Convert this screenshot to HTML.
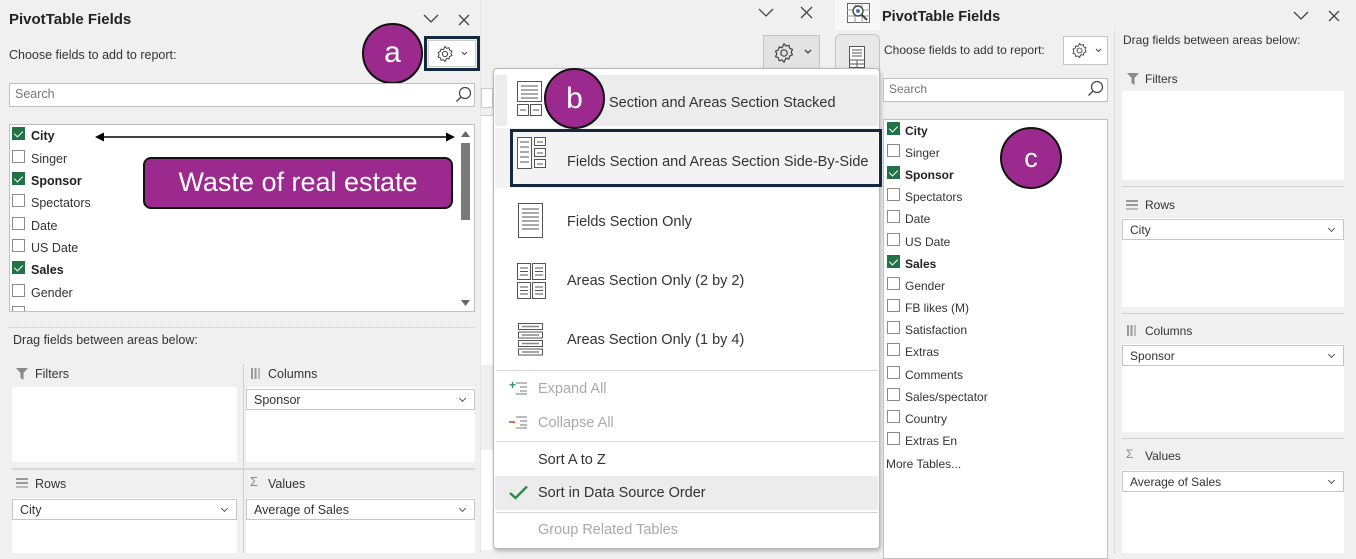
<!DOCTYPE html>
<html><head><meta charset="utf-8"><style>
*{box-sizing:border-box;margin:0;padding:0}
body{width:1356px;height:553px;background:#f0f0f0;position:relative;overflow:hidden;font-family:"Liberation Sans",sans-serif;color:#333}
.a{position:absolute}
.t{position:absolute;white-space:nowrap;font-size:12.5px;color:#333}
.b{font-weight:bold;color:#222}
.cb{position:absolute;width:13px;height:13px;border:1px solid #8a8a8a;background:#fff}
.ck{background:#217346;border-color:#217346}
.ck:after{content:"";position:absolute;left:3px;top:1px;width:4px;height:7px;border:solid #fff;border-width:0 1.5px 1.5px 0;transform:rotate(45deg)}
.box{position:absolute;background:#fff;border:1px solid #c8c8c8}
.wb{position:absolute;background:#fff}
.dd{position:absolute;background:#fff;border:1px solid #c6c6c6;font-size:12.5px;padding:3px 7px;color:#333}
.dd:after{content:"";position:absolute;right:9px;top:6px;width:4px;height:4px;border:solid #555;border-width:0 1.2px 1.2px 0;transform:rotate(45deg)}
.circ{position:absolute;border-radius:50%;background:#9c2a8e;border:2px solid #111;color:#fff;font-size:30px;text-align:center}
.mi{position:absolute;font-size:14.5px;color:#333;white-space:nowrap}
.dis{color:#aaa}
.hr{position:absolute;height:1px;background:#d6d6d6}
</style></head><body>

<!-- LEFT PANEL -->
<div class="t b" style="left:9px;top:11px;font-size:15px">PivotTable Fields</div>
<svg class="a" style="left:423px;top:14px" width="16" height="10"><path d="M1 1 L8 8 L15 1" stroke="#444" stroke-width="1.3" fill="none"/></svg>
<svg class="a" style="left:458px;top:14px" width="12" height="12"><path d="M1 1L11 11M11 1L1 11" stroke="#444" stroke-width="1.3"/></svg>
<div class="t" style="left:9px;top:48px;font-size:12.5px">Choose fields to add to report:</div>
<div class="a" style="left:424px;top:36px;width:56px;height:35px;border:3px solid #13293d;background:#f0f0f0"></div>
<div class="a" style="left:428px;top:40px;width:48px;height:27px;background:#fff;border:1px solid #ccc"></div>
<svg class="a" style="left:436px;top:45px" width="18" height="18" viewBox="0 0 18 18"><path d="M9 1.5l1.6 1.8 2.4-.6.6 2.4 2.3 1-1 2.2 1 2.2-2.3 1-.6 2.4-2.4-.6L9 16.5l-1.6-1.8-2.4.6-.6-2.4-2.3-1 1-2.2-1-2.2 2.3-1 .6-2.4 2.4.6z" fill="none" stroke="#444" stroke-width="1"/><circle cx="9" cy="9" r="2.6" fill="none" stroke="#444" stroke-width="1"/></svg>
<svg class="a" style="left:461px;top:51px" width="7" height="5"><path d="M1 1L3.5 3.5L6 1" stroke="#444" fill="none"/></svg>
<div class="circ" style="left:362px;top:23px;width:61px;height:61px;line-height:56px">a</div>

<div class="box" style="left:9px;top:83px;width:466px;height:24px;border-color:#c0c0c0"></div>
<div class="t" style="left:15px;top:87px;color:#777">Search</div>
<svg class="a" style="left:455px;top:86px" width="17" height="17"><circle cx="10" cy="7" r="5.5" fill="none" stroke="#444" stroke-width="1.2"/><path d="M6 11L1.5 15.5" stroke="#444" stroke-width="1.3"/></svg>

<div class="box" style="left:9px;top:124px;width:466px;height:188px;border-color:#c0c0c0"></div>
<div class="a" style="left:461px;top:143px;width:9px;height:77px;background:#7a7a7a"></div>
<svg class="a" style="left:460px;top:129px" width="11" height="180"><path d="M1 8L5.5 2L10 8Z M1 171L5.5 177L10 171Z" fill="#666"/></svg>

<div class="cb ck" style="left:12px;top:127px"></div><div class="t b" style="left:31px;top:129px">City</div>
<div class="cb" style="left:12px;top:150px"></div><div class="t" style="left:31px;top:152px">Singer</div>
<div class="cb ck" style="left:12px;top:172px"></div><div class="t b" style="left:31px;top:174px">Sponsor</div>
<div class="cb" style="left:12px;top:194px"></div><div class="t" style="left:31px;top:196px">Spectators</div>
<div class="cb" style="left:12px;top:217px"></div><div class="t" style="left:31px;top:219px">Date</div>
<div class="cb" style="left:12px;top:239px"></div><div class="t" style="left:31px;top:241px">US Date</div>
<div class="cb ck" style="left:12px;top:261px"></div><div class="t b" style="left:31px;top:263px">Sales</div>
<div class="cb" style="left:12px;top:284px"></div><div class="t" style="left:31px;top:286px">Gender</div>
<div class="cb" style="left:12px;top:306px;height:5px;border-bottom:none"></div>

<svg class="a" style="left:94px;top:130px" width="362" height="14"><path d="M8 7H354" stroke="#000" stroke-width="1.6"/><path d="M1 7L10 2.5V11.5Z M361 7L352 2.5V11.5Z" fill="#000"/></svg>
<div class="a" style="left:143px;top:157px;width:310px;height:52px;background:#9c2a8e;border:2px solid #111;border-radius:8px;color:#fff;font-size:27px;text-align:center;line-height:47px">Waste of real estate</div>

<div class="a" style="left:9px;top:327px;width:466px;border-top:1px dotted #c8c8c8"></div>
<div class="t" style="left:13px;top:333px">Drag fields between areas below:</div>
<svg class="a" style="left:16px;top:368px" width="12" height="12"><path d="M0 0H12L7.5 5V12L4.5 10V5Z" fill="#8a8a8a"/></svg>
<div class="t" style="left:35px;top:367px">Filters</div>
<svg class="a" style="left:251px;top:368px" width="10" height="11"><rect x="0" y="0" width="2" height="11" fill="#999"/><rect x="3.5" y="0" width="2" height="11" fill="#999"/><rect x="7" y="0" width="2" height="11" fill="#bbb"/></svg>
<div class="t" style="left:268px;top:367px">Columns</div>
<div class="wb" style="left:12px;top:387px;width:225px;height:75px"></div>
<div class="wb" style="left:246px;top:387px;width:229px;height:75px"></div>
<div class="dd" style="left:246px;top:389px;width:229px;height:21px">Sponsor</div>
<div class="a" style="left:243px;top:364px;width:1px;height:189px;background:#d0d0d0"></div>
<div class="a" style="left:12px;top:468px;width:463px;height:2px;background:#d6d6d6"></div>
<svg class="a" style="left:16px;top:478px" width="12" height="10"><rect y="0" width="12" height="2" fill="#999"/><rect y="4" width="12" height="2" fill="#999"/><rect y="8" width="12" height="2" fill="#bbb"/></svg>
<div class="t" style="left:35px;top:477px">Rows</div>
<div class="t" style="left:250px;top:474px;font-size:13px;color:#888">Σ</div>
<div class="t" style="left:268px;top:477px">Values</div>
<div class="wb" style="left:12px;top:498px;width:225px;height:55px"></div>
<div class="wb" style="left:246px;top:498px;width:229px;height:55px"></div>
<div class="dd" style="left:12px;top:499px;width:225px;height:21px">City</div>
<div class="dd" style="left:246px;top:499px;width:229px;height:21px">Average of Sales</div>
<div class="a" style="left:480px;top:0;width:1px;height:553px;background:#e4e4e4"></div>

<!-- MIDDLE -->
<div class="a" style="left:481px;top:0;width:354px;height:553px;background:#f0f0f0"></div>
<div class="a" style="left:481px;top:88px;width:12px;height:20px;background:#fff;border:1px solid #ccc"></div>
<div class="a" style="left:481px;top:115px;width:12px;height:250px;background:#fff;border-top:1px solid #ccc"></div>
<div class="a" style="left:481px;top:450px;width:12px;height:100px;background:#fff"></div>
<svg class="a" style="left:758px;top:8px" width="16" height="10"><path d="M1 1 L8 8 L15 1" stroke="#444" stroke-width="1.3" fill="none"/></svg>
<svg class="a" style="left:800px;top:6px" width="13" height="13"><path d="M1 1L12 12M12 1L1 12" stroke="#444" stroke-width="1.3"/></svg>
<div class="a" style="left:763px;top:35px;width:57px;height:35px;background:#e3e3e3;border:1px solid #c4c4c4"></div>
<svg class="a" style="left:773px;top:42px" width="22" height="22" viewBox="0 0 18 18"><path d="M9 1.5l1.6 1.8 2.4-.6.6 2.4 2.3 1-1 2.2 1 2.2-2.3 1-.6 2.4-2.4-.6L9 16.5l-1.6-1.8-2.4.6-.6-2.4-2.3-1 1-2.2-1-2.2 2.3-1 .6-2.4 2.4.6z" fill="none" stroke="#444" stroke-width="1"/><circle cx="9" cy="9" r="2.6" fill="none" stroke="#444" stroke-width="1"/></svg>
<svg class="a" style="left:804px;top:49px" width="8" height="6"><path d="M1 1L4 4L7 1" stroke="#444" stroke-width="1.3" fill="none"/></svg>
<div class="a" style="left:835px;top:34px;width:45px;height:45px;background:#e8e8e8;border:1px solid #c4c4c4;border-radius:6px 6px 0 0"></div>
<svg class="a" style="left:849px;top:46px" width="16" height="22"><rect x="0.5" y="0.5" width="15" height="21" fill="#fff" stroke="#555"/><path d="M3 4H13M3 7H13M3 10H13M0 14H16M0 18H16M8 14V22" stroke="#555"/></svg>

<!-- MENU -->
<div class="a" style="left:493px;top:68px;width:387px;height:481px;background:#fff;border:1px solid #b8b8b8;border-radius:4px;box-shadow:1px 2px 4px rgba(0,0,0,.25)"></div>
<div class="a" style="left:495px;top:75px;width:383px;height:51px;background:#ececec"></div>
<div class="a" style="left:507px;top:75px;width:55px;height:51px;background:#fff"></div>
<div class="a" style="left:495px;top:128px;width:383px;height:60px;background:#f3f3f3"></div>
<div class="a" style="left:510px;top:129px;width:372px;height:58px;border:3px solid #13293d"></div>
<svg class="a" style="left:517px;top:81px" width="26" height="35"><rect x=".5" y=".5" width="24" height="20" fill="#fff" stroke="#555"/><path d="M4 5H21M4 9H21M4 13H21M4 17H21" stroke="#555"/><rect x=".5" y="23.5" width="11" height="11" fill="#fff" stroke="#555"/><rect x="13.5" y="23.5" width="11" height="11" fill="#fff" stroke="#555"/><path d="M3 29H9M16 29H22" stroke="#555"/></svg>
<svg class="a" style="left:517px;top:137px" width="30" height="32"><rect x=".5" y=".5" width="14" height="31" fill="#fff" stroke="#555"/><path d="M3 5H12M3 10H12M3 15H12M3 20H12M3 25H12" stroke="#555"/><rect x="17.5" y=".5" width="11" height="8" fill="#fff" stroke="#555"/><rect x="17.5" y="11.5" width="11" height="8" fill="#fff" stroke="#555"/><rect x="17.5" y="22.5" width="11" height="8" fill="#fff" stroke="#555"/><path d="M20 5H26M20 16H26M20 27H26" stroke="#555"/></svg>
<svg class="a" style="left:518px;top:203px" width="26" height="36"><rect x=".5" y=".5" width="24" height="34" fill="#fff" stroke="#555"/><path d="M4 6H21M4 10H21M4 14H21M4 18H21M4 22H21M4 26H21" stroke="#555"/></svg>
<svg class="a" style="left:517px;top:263px" width="30" height="36"><rect x=".5" y=".5" width="13" height="16" fill="#fff" stroke="#555"/><rect x="15.5" y=".5" width="13" height="16" fill="#fff" stroke="#555"/><rect x=".5" y="19.5" width="13" height="16" fill="#fff" stroke="#555"/><rect x="15.5" y="19.5" width="13" height="16" fill="#fff" stroke="#555"/><path d="M3 5H11M3 8.5H11M3 12H11M18 5H26M18 8.5H26M18 12H26M3 24H11M3 27.5H11M3 31H11M18 24H26M18 27.5H26M18 31H26" stroke="#555"/></svg>
<svg class="a" style="left:518px;top:323px" width="26" height="33"><g fill="#fff" stroke="#555"><rect x=".5" y=".5" width="24" height="6"/><rect x=".5" y="9" width="24" height="6"/><rect x=".5" y="17.5" width="24" height="6"/><rect x=".5" y="26" width="24" height="6"/></g><path d="M4 3.5H21M4 12H21M4 20.5H21M4 29H21" stroke="#888" stroke-width="1.5"/></svg>
<div class="mi" style="left:609px;top:95px">Section and Areas Section Stacked</div>
<div class="mi" style="left:567px;top:154px">Fields Section and Areas Section Side-By-Side</div>
<div class="mi" style="left:567px;top:214px">Fields Section Only</div>
<div class="mi" style="left:567px;top:273px">Areas Section Only (2 by 2)</div>
<div class="mi" style="left:567px;top:332px">Areas Section Only (1 by 4)</div>
<div class="circ" style="left:544px;top:68px;width:61px;height:61px;line-height:57px">b</div>
<div class="hr" style="left:496px;top:370px;width:382px"></div>
<div class="t" style="left:509px;top:378px;color:#2a9a55;font-size:12px;font-weight:bold">+</div>
<svg class="a" style="left:516px;top:382px" width="12" height="13"><path d="M0 1H11M4 5H11M4 9H11M0 12H11" stroke="#777"/></svg>
<div class="mi dis" style="left:538px;top:381px">Expand All</div>
<div class="a" style="left:509px;top:421px;width:6px;height:2px;background:#e07040"></div>
<svg class="a" style="left:516px;top:416px" width="12" height="13"><path d="M0 1H11M4 5H11M4 9H11M0 12H11" stroke="#777"/></svg>
<div class="mi dis" style="left:538px;top:415px">Collapse All</div>
<div class="hr" style="left:496px;top:441px;width:382px"></div>
<div class="mi" style="left:538px;top:452px">Sort A to Z</div>
<div class="a" style="left:495px;top:476px;width:383px;height:34px;background:#ececec"></div>
<svg class="a" style="left:509px;top:485px" width="19" height="15"><path d="M1 8L6.5 13L18 1.5" stroke="#2a8a4a" stroke-width="2.4" fill="none"/></svg>
<div class="mi" style="left:538px;top:485px">Sort in Data Source Order</div>
<div class="hr" style="left:496px;top:512px;width:382px"></div>
<div class="mi dis" style="left:538px;top:522px">Group Related Tables</div>

<!-- RIGHT PANEL -->
<div class="a" style="left:835px;top:0;width:45px;height:30px;background:#f7f7f7"></div>
<svg class="a" style="left:847px;top:3px" width="23" height="20"><rect x=".5" y=".5" width="22" height="19" fill="#fff" stroke="#666"/><path d="M0 7H23M0 13H23M8 0V20M15 0V20" stroke="#999"/><circle cx="11" cy="8" r="5" fill="#fff" stroke="#444" stroke-width="1.4"/><circle cx="11" cy="8" r="2" fill="#3a7ac0"/><path d="M14.5 11.5L20 17" stroke="#444" stroke-width="2"/></svg>
<div class="t b" style="left:882px;top:9px;font-size:14.5px">PivotTable Fields</div>
<svg class="a" style="left:1293px;top:11px" width="16" height="10"><path d="M1 1 L8 8 L15 1" stroke="#444" stroke-width="1.3" fill="none"/></svg>
<svg class="a" style="left:1328px;top:10px" width="12" height="12"><path d="M1 1L11 11M11 1L1 11" stroke="#444" stroke-width="1.3"/></svg>
<div class="t" style="left:884px;top:43px;font-size:12px">Choose fields to add to report:</div>
<div class="a" style="left:1063px;top:36px;width:45px;height:29px;background:#fff;border:1px solid #c4c4c4"></div>
<svg class="a" style="left:1071px;top:42px" width="17" height="17" viewBox="0 0 18 18"><path d="M9 1.5l1.6 1.8 2.4-.6.6 2.4 2.3 1-1 2.2 1 2.2-2.3 1-.6 2.4-2.4-.6L9 16.5l-1.6-1.8-2.4.6-.6-2.4-2.3-1 1-2.2-1-2.2 2.3-1 .6-2.4 2.4.6z" fill="none" stroke="#444" stroke-width="1"/><circle cx="9" cy="9" r="2.6" fill="none" stroke="#444" stroke-width="1"/></svg>
<svg class="a" style="left:1095px;top:48px" width="7" height="5"><path d="M1 1L3.5 3.5L6 1" stroke="#444" fill="none"/></svg>
<div class="box" style="left:883px;top:78px;width:225px;height:24px;border-color:#c0c0c0"></div>
<div class="t" style="left:889px;top:82px;color:#777;font-size:12px">Search</div>
<svg class="a" style="left:1087px;top:80px" width="17" height="17"><circle cx="10" cy="7" r="5.5" fill="none" stroke="#444" stroke-width="1.2"/><path d="M6 11L1.5 15.5" stroke="#444" stroke-width="1.3"/></svg>
<div class="box" style="left:883px;top:119px;width:225px;height:440px;border-color:#c0c0c0"></div>

<div class="cb ck" style="left:887px;top:122px"></div><div class="t b" style="left:905px;top:124px;font-size:12px">City</div>
<div class="cb" style="left:887px;top:144px"></div><div class="t" style="left:905px;top:146px;font-size:12px">Singer</div>
<div class="cb ck" style="left:887px;top:166px"></div><div class="t b" style="left:905px;top:168px;font-size:12px">Sponsor</div>
<div class="cb" style="left:887px;top:188px"></div><div class="t" style="left:905px;top:190px;font-size:12px">Spectators</div>
<div class="cb" style="left:887px;top:210px"></div><div class="t" style="left:905px;top:212px;font-size:12px">Date</div>
<div class="cb" style="left:887px;top:233px"></div><div class="t" style="left:905px;top:235px;font-size:12px">US Date</div>
<div class="cb ck" style="left:887px;top:255px"></div><div class="t b" style="left:905px;top:257px;font-size:12px">Sales</div>
<div class="cb" style="left:887px;top:277px"></div><div class="t" style="left:905px;top:279px;font-size:12px">Gender</div>
<div class="cb" style="left:887px;top:299px"></div><div class="t" style="left:905px;top:301px;font-size:12px">FB likes (M)</div>
<div class="cb" style="left:887px;top:321px"></div><div class="t" style="left:905px;top:323px;font-size:12px">Satisfaction</div>
<div class="cb" style="left:887px;top:343px"></div><div class="t" style="left:905px;top:345px;font-size:12px">Extras</div>
<div class="cb" style="left:887px;top:366px"></div><div class="t" style="left:905px;top:368px;font-size:12px">Comments</div>
<div class="cb" style="left:887px;top:388px"></div><div class="t" style="left:905px;top:390px;font-size:12px">Sales/spectator</div>
<div class="cb" style="left:887px;top:410px"></div><div class="t" style="left:905px;top:412px;font-size:12px">Country</div>
<div class="cb" style="left:887px;top:432px"></div><div class="t" style="left:905px;top:434px;font-size:12px">Extras En</div>
<div class="t" style="left:886px;top:457px;font-size:12px">More Tables...</div>
<div class="circ" style="left:1000px;top:127px;width:62px;height:62px;line-height:58px;font-size:27px">c</div>

<div class="a" style="left:1114px;top:30px;height:523px;border-left:1px dotted #c8c8c8"></div>
<div class="t" style="left:1123px;top:33px;font-size:12px">Drag fields between areas below:</div>
<svg class="a" style="left:1127px;top:73px" width="12" height="12"><path d="M0 0H12L7.5 5V12L4.5 10V5Z" fill="#8a8a8a"/></svg>
<div class="t" style="left:1145px;top:72px;font-size:12px">Filters</div>
<div class="wb" style="left:1122px;top:91px;width:222px;height:89px"></div>
<div class="a" style="left:1122px;top:186px;width:222px;height:1px;background:#d0d0d0"></div>
<svg class="a" style="left:1126px;top:200px" width="12" height="10"><rect y="0" width="12" height="2" fill="#999"/><rect y="4" width="12" height="2" fill="#999"/><rect y="8" width="12" height="2" fill="#bbb"/></svg>
<div class="t" style="left:1145px;top:198px;font-size:12px">Rows</div>
<div class="wb" style="left:1122px;top:218px;width:222px;height:89px"></div>
<div class="dd" style="left:1122px;top:219px;width:222px;height:21px;font-size:12px">City</div>
<div class="a" style="left:1122px;top:313px;width:222px;height:1px;background:#d0d0d0"></div>
<svg class="a" style="left:1127px;top:325px" width="10" height="11"><rect x="0" y="0" width="2" height="11" fill="#999"/><rect x="3.5" y="0" width="2" height="11" fill="#999"/><rect x="7" y="0" width="2" height="11" fill="#bbb"/></svg>
<div class="t" style="left:1145px;top:324px;font-size:12px">Columns</div>
<div class="wb" style="left:1122px;top:344px;width:222px;height:88px"></div>
<div class="dd" style="left:1122px;top:345px;width:222px;height:21px;font-size:12px">Sponsor</div>
<div class="a" style="left:1122px;top:438px;width:222px;height:1px;background:#d0d0d0"></div>
<div class="t" style="left:1126px;top:447px;font-size:12px;color:#888">Σ</div>
<div class="t" style="left:1145px;top:449px;font-size:12px">Values</div>
<div class="wb" style="left:1122px;top:470px;width:222px;height:83px"></div>
<div class="dd" style="left:1122px;top:471px;width:222px;height:21px;font-size:12px">Average of Sales</div>
</body></html>
